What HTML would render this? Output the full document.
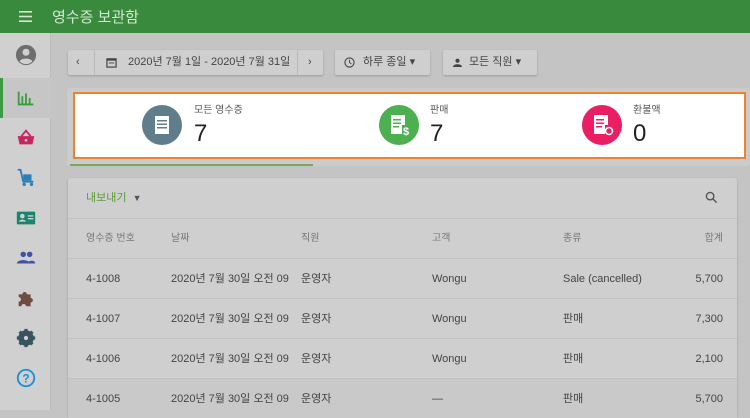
<!DOCTYPE html>
<html><head><meta charset="utf-8"><style>
*{box-sizing:border-box;margin:0;padding:0}
body{width:750px;height:410px;overflow:hidden;background:#c4c4c4;font-family:"Liberation Sans","Noto Sans CJK KR",sans-serif;position:relative;color:#3a3a3a}
.bar{position:absolute;left:0;top:0;width:750px;height:33px;background:#3a8a3e;color:#d4e8d4;font-size:15px}
.side{position:absolute;left:0;top:33px;width:51px;height:377px;background:#d0d0d0;border-right:1px solid #bcbcbc}
.ic{position:absolute;left:15px;width:22px;height:22px}
.btn{position:absolute;top:50px;height:25px;background:#cfcfcf;border-radius:2px;box-shadow:0 1px 2px rgba(0,0,0,.2);font-size:11px;color:#444;line-height:25px}
.card{position:absolute;left:67px;top:88px;width:683px;height:78px;background:#cbcbcb;border-radius:3px}
.hl{position:absolute;left:73px;top:92px;width:673px;height:67px;background:#fff;border:2.5px solid #f0812d}
.circ{position:absolute;top:105px;width:40px;height:40px;border-radius:50%}
.lbl{position:absolute;top:104px;font-size:10px;color:#555;line-height:14px}
.num{position:absolute;top:120px;font-size:24px;color:#222;line-height:28px}
.tbl{position:absolute;left:68px;top:178px;width:669px;height:240px;background:#cfcfcf;border-radius:3px;box-shadow:0 1px 2px rgba(0,0,0,.2)}
.row{position:absolute;left:0;width:669px;height:40px;border-top:1px solid #c0c0c0;font-size:11px;color:#444}
.row span{position:absolute;top:12px;white-space:nowrap;line-height:16px;height:16px}
.h span{color:#777;font-size:10px}
</style></head><body>
<div class="bar">
<svg style="position:absolute;left:19px;top:11px" width="13" height="11"><rect y="0" width="13" height="1.6" fill="#d4e8d4"/><rect y="4.7" width="13" height="1.6" fill="#d4e8d4"/><rect y="9.4" width="13" height="1.6" fill="#d4e8d4"/></svg>
<span style="position:absolute;left:52px;top:6px">영수증 보관함</span></div>
<div class="side">
<svg class="ic" style="top:11px" viewBox="0 0 24 24"><circle cx="12" cy="12" r="11" fill="#6e6e6e"/><circle cx="12" cy="9" r="3.8" fill="#d0d0d0"/><path d="M5 19c2-4 12-4 14 0c-2 2-5 3-7 3s-5-1-7-3z" fill="#d0d0d0"/></svg>
<div style="position:absolute;left:0;top:45px;width:51px;height:40px;background:#c6c6c6;border-left:3px solid #3d9a40"></div>
<svg class="ic" style="top:54px" viewBox="0 0 24 24"><path d="M4 5v14h16" stroke="#3d9a40" stroke-width="2" fill="none"/><rect x="7" y="10" width="2" height="8" fill="#3d9a40"/><rect x="11" y="7" width="2" height="11" fill="#3d9a40"/><rect x="15" y="12" width="2" height="6" fill="#3d9a40"/></svg>
<svg class="ic" style="top:94px" viewBox="0 0 24 24"><path d="M3 10h18l-2 9H5z" fill="#c8255f"/><path d="M7 10l5-6 5 6" stroke="#c8255f" stroke-width="2" fill="none"/><circle cx="12" cy="14.5" r="1.5" fill="#d0d0d0"/></svg>
<svg class="ic" style="top:134px" viewBox="0 0 24 24"><path d="M3 3h3l3 13h11" stroke="#2a7fb8" stroke-width="2" fill="none"/><rect x="9" y="8" width="9" height="7" fill="#2a7fb8"/><circle cx="10" cy="19" r="1.8" fill="#2a7fb8"/><circle cx="18" cy="19" r="1.8" fill="#2a7fb8"/></svg>
<svg class="ic" style="top:174px" viewBox="0 0 24 24"><rect x="2" y="5" width="20" height="14" rx="1" fill="#16866e"/><circle cx="8" cy="10" r="2.5" fill="#d0d0d0"/><path d="M4 16c1-3 7-3 8 0z" fill="#d0d0d0"/><rect x="14" y="9" width="6" height="1.5" fill="#d0d0d0"/><rect x="14" y="12" width="6" height="1.5" fill="#d0d0d0"/></svg>
<svg class="ic" style="top:214px" viewBox="0 0 24 24"><circle cx="9" cy="8" r="3" fill="#3f51a8"/><circle cx="16" cy="8" r="3" fill="#3f51a8"/><path d="M2 18c0-5 14-5 14 0zM13 18c0-3 9-5 9 0z" fill="#3f51a8"/></svg>
<svg class="ic" style="top:254px" viewBox="0 0 24 24"><path d="M4 8h4a2.5 2.5 0 015 0h4v4a2.5 2.5 0 010 5v4h-5a2.5 2.5 0 00-5 0H4v-5a2.5 2.5 0 000-5z" fill="#6d4c41"/></svg>
<svg class="ic" style="top:294px" viewBox="0 0 24 24"><circle cx="12" cy="12" r="6.5" fill="none" stroke="#37545f" stroke-width="4"/><g stroke="#37545f" stroke-width="3.5"><path d="M12 2v20M2 12h20M5 5l14 14M19 5L5 19"/></g><circle cx="12" cy="12" r="2.3" fill="#d0d0d0"/></svg>
<svg class="ic" style="top:334px" viewBox="0 0 24 24"><circle cx="12" cy="12" r="9" fill="none" stroke="#1f8fd6" stroke-width="2"/><text x="12" y="17" font-size="13" text-anchor="middle" fill="#1f8fd6" font-family="Liberation Sans" font-weight="bold">?</text></svg>
</div>
<div class="btn" style="left:68px;width:255px">
<span style="position:absolute;left:8px">‹</span>
<span style="position:absolute;left:26px;top:0;height:25px;border-left:1px solid #bbb"></span>
<svg style="position:absolute;left:38px;top:7px" width="11" height="11" viewBox="0 0 12 12"><rect x="1" y="2" width="10" height="9" fill="none" stroke="#444" stroke-width="1.3"/><rect x="1" y="2" width="10" height="2" fill="#444"/><rect x="3" y="6" width="6" height="1" fill="#444"/></svg>
<span style="position:absolute;left:60px">2020년 7월 1일 - 2020년 7월 31일</span>
<span style="position:absolute;left:229px;top:0;height:25px;border-left:1px solid #bbb"></span>
<span style="position:absolute;left:240px">›</span></div>
<div class="btn" style="left:335px;width:95px">
<svg style="position:absolute;left:9px;top:7px" width="11" height="11" viewBox="0 0 12 12"><circle cx="6" cy="6" r="5" fill="none" stroke="#444" stroke-width="1.2"/><path d="M6 3v3l2 1.5" stroke="#444" fill="none"/></svg>
<span style="position:absolute;left:28px">하루 종일 ▾</span></div>
<div class="btn" style="left:443px;width:94px">
<svg style="position:absolute;left:10px;top:8px" width="9" height="9" viewBox="0 0 10 10"><circle cx="5" cy="3" r="2.3" fill="#444"/><path d="M0 10c0-4 10-4 10 0z" fill="#444"/></svg>
<span style="position:absolute;left:26px">모든 직원 ▾</span></div>
<div class="card"></div>
<div style="position:absolute;left:70px;top:164px;width:243px;height:2px;background:#7da760"></div>
<div class="hl"></div>
<div class="circ" style="left:142px;background:#607d8b"><svg width="40" height="40" viewBox="0 0 40 40"><rect x="13" y="11" width="14" height="18" fill="#fff"/><g fill="#607d8b"><rect x="15" y="15" width="10" height="1.5"/><rect x="15" y="18.5" width="10" height="1.5"/><rect x="15" y="22" width="10" height="1.5"/></g></svg></div>
<div class="lbl" style="left:194px">모든 영수증</div><div class="num" style="left:194px">7</div>
<div class="circ" style="left:379px;background:#4caf50"><svg width="40" height="40" viewBox="0 0 40 40"><path d="M12 10h14v10h-3v9h-11z" fill="#fff"/><g fill="#4caf50"><rect x="14" y="14" width="8" height="1.5"/><rect x="14" y="17.5" width="8" height="1.5"/><rect x="14" y="21" width="6" height="1.5"/></g><text x="27" y="30" font-size="11" font-weight="bold" fill="#fff" text-anchor="middle" font-family="Liberation Sans">$</text></svg></div>
<div class="lbl" style="left:430px">판매</div><div class="num" style="left:430px">7</div>
<div class="circ" style="left:582px;background:#e91e63"><svg width="40" height="40" viewBox="0 0 40 40"><path d="M12 10h14v10h-3v9h-11z" fill="#fff"/><g fill="#e91e63"><rect x="14" y="14" width="8" height="1.5"/><rect x="14" y="17.5" width="8" height="1.5"/><rect x="14" y="21" width="6" height="1.5"/></g><circle cx="27" cy="26" r="3.5" fill="none" stroke="#fff" stroke-width="1.6"/></svg></div>
<div class="lbl" style="left:633px">환불액</div><div class="num" style="left:633px">0</div>
<div class="tbl">
<span style="position:absolute;left:18px;top:13px;font-size:11px;line-height:14px;color:#5f9a3a">내보내기 &nbsp;<span style="color:#555;font-size:9px">▼</span></span>
<svg style="position:absolute;left:637px;top:13px" width="13" height="13" viewBox="0 0 14 14"><circle cx="5.5" cy="5.5" r="4" fill="none" stroke="#555" stroke-width="1.5"/><path d="M8.5 8.5l4 4" stroke="#555" stroke-width="1.6"/></svg>
<div class="row h" style="top:40px"><span style="left:18px">영수증 번호</span><span style="left:103px">날짜</span><span style="left:233px">직원</span><span style="left:364px">고객</span><span style="left:495px">종류</span><span style="right:14px">합계</span></div>
<div class="row" style="top:80px"><span style="left:18px">4-1008</span><span style="left:103px">2020년 7월 30일 오전 09</span><span style="left:233px">운영자</span><span style="left:364px">Wongu</span><span style="left:495px">Sale (cancelled)</span><span style="right:14px">5,700</span></div>
<div class="row" style="top:120px"><span style="left:18px">4-1007</span><span style="left:103px">2020년 7월 30일 오전 09</span><span style="left:233px">운영자</span><span style="left:364px">Wongu</span><span style="left:495px">판매</span><span style="right:14px">7,300</span></div>
<div class="row" style="top:160px"><span style="left:18px">4-1006</span><span style="left:103px">2020년 7월 30일 오전 09</span><span style="left:233px">운영자</span><span style="left:364px">Wongu</span><span style="left:495px">판매</span><span style="right:14px">2,100</span></div>
<div class="row" style="top:200px;background:#c9c9c9"><span style="left:18px">4-1005</span><span style="left:103px">2020년 7월 30일 오전 09</span><span style="left:233px">운영자</span><span style="left:364px">—</span><span style="left:495px">판매</span><span style="right:14px">5,700</span></div>
</div>
</body></html>
